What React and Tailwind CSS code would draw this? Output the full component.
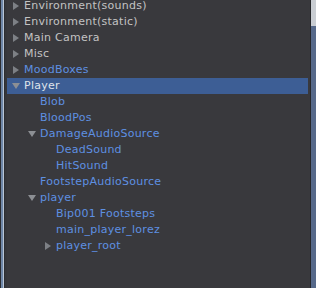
const rows = [
  { label: 'Environment(sounds)', depth: 0, arrow: 'right', blue: false },
  { label: 'Environment(static)', depth: 0, arrow: 'right', blue: false },
  { label: 'Main Camera', depth: 0, arrow: 'right', blue: false },
  { label: 'Misc', depth: 0, arrow: 'right', blue: false },
  { label: 'MoodBoxes', depth: 0, arrow: 'right', blue: true },
  { label: 'Player', depth: 0, arrow: 'down', blue: false, selected: true },
  { label: 'Blob', depth: 1, blue: true },
  { label: 'BloodPos', depth: 1, blue: true },
  { label: 'DamageAudioSource', depth: 1, arrow: 'down', blue: true },
  { label: 'DeadSound', depth: 2, blue: true },
  { label: 'HitSound', depth: 2, blue: true },
  { label: 'FootstepAudioSource', depth: 1, blue: true },
  { label: 'player', depth: 1, arrow: 'down', blue: true },
  { label: 'Bip001 Footsteps', depth: 2, blue: true },
  { label: 'main_player_lorez', depth: 2, blue: true },
  { label: 'player_root', depth: 2, arrow: 'right', blue: true },
];

const Arrow = ({ dir }) =>
  dir === 'down' ? (
    <svg width="8" height="8" viewBox="0 0 8 8">
      <polygon points="0,1 8,1 4,7" fill="#8c8f94" />
    </svg>
  ) : (
    <svg width="8" height="8" viewBox="0 0 8 8">
      <polygon points="1,0 7,4 1,8" fill="#7d8085" />
    </svg>
  );

const Row = ({ row }) => {
  const pad = row.depth * 16;
  return (
    <div className={`h-[16px] flex items-center ${row.selected ? 'bg-[#3d5e95]' : ''}`}>
      <div style={{ width: pad }} className="shrink-0" />
      <div className="w-[17px] shrink-0 flex items-center pl-[5px]">
        {row.arrow && <Arrow dir={row.arrow} />}
      </div>
      <span
        className={`text-[11px] leading-[16px] tracking-[0.25px] whitespace-nowrap ${
          row.selected ? 'text-[#dfe3ea]' : row.blue ? 'text-[#5e90e2]' : 'text-[#c3c3c3]'
        }`}
      >
        {row.label}
      </span>
    </div>
  );
};

export default function App() {
  return (
    <div
      className="w-[316px] h-[288px] flex overflow-hidden bg-[#39393d]"
      style={{ fontFamily: '"DejaVu Sans", Verdana, sans-serif' }}
    >
      {/* left frame edge */}
      <div className="w-[7px] shrink-0 flex">
        <div className="w-[1px] bg-[#2b2c30]" />
        <div className="w-[2px] bg-[#6f87a8]" />
        <div className="w-[1px] bg-[#b9c6d6]" />
        <div className="w-[1px] bg-[#2c2d31]" />
        <div className="w-[2px] bg-[#36373b]" />
      </div>

      {/* hierarchy */}
      <div className="flex-1 flex flex-col -mt-[2px]">
        {rows.map((r) => (
          <Row key={r.label} row={r} />
        ))}
      </div>

      {/* right frame edge */}
      <div className="w-[8px] shrink-0 flex">
        <div className="w-[2px] bg-[#39393d]" />
        <div className="w-[1px] bg-[#26272a]" />
        <div className="flex-1 flex flex-col">
          <div className="h-[26px] bg-[#c9cdd2]" />
          <div className="flex-1 bg-[#56698a]" />
        </div>
      </div>
    </div>
  );
}
